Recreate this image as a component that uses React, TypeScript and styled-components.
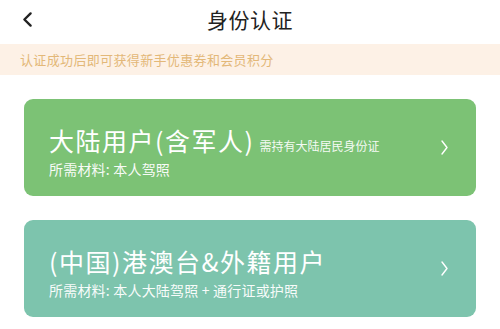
import React from "react";
import styled, { createGlobalStyle } from "styled-components";

const Global = createGlobalStyle`
  html, body { margin: 0; padding: 0; background: #ffffff; }
  body { font-family: "Noto Sans CJK SC", "Noto Sans", sans-serif; }
  * { box-sizing: border-box; }
`;

const Page = styled.div`
  width: 500px;
  height: 329px;
  overflow: hidden;
  background: #ffffff;
  display: flex;
  flex-direction: column;
`;

const Header = styled.header`
  height: 44px;
  display: grid;
  grid-template-columns: 60px 1fr 60px;
  align-items: center;
`;

const BackButton = styled.button`
  border: none;
  background: none;
  padding: 0 0 0 22px;
  height: 44px;
  display: flex;
  align-items: center;
  margin-top: -5px;
`;

const Title = styled.h1`
  margin: 0;
  margin-top: -6px;
  text-align: center;
  font-size: 21px;
  font-weight: 400;
  color: #222222;
  letter-spacing: 0.5px;
`;

const Banner = styled.div`
  height: 31px;
  background: #fdf1e6;
  color: #e3b878;
  font-size: 13px;
  letter-spacing: 0.35px;
  display: flex;
  align-items: center;
  padding-left: 20px;
`;

const List = styled.div`
  display: flex;
  flex-direction: column;
  gap: 24px;
  padding: 24px 24px 0;
`;

const Card = styled.div<{ $bg: string }>`
  height: 97px;
  border-radius: 9px;
  background: ${(p) => p.$bg};
  display: flex;
  align-items: center;
  padding: 0 28px 0 25px;
  color: #ffffff;
`;

const CardBody = styled.div`
  flex: 1;
  display: flex;
  flex-direction: column;
  gap: 4px;
  margin-top: 9px;
`;

const TitleRow = styled.div`
  display: flex;
  align-items: baseline;
  gap: 5px;
`;

const CardTitle = styled.span`
  font-size: 25px;
  line-height: 30px;
  font-weight: 400;
  letter-spacing: 1.5px;
`;

const Note = styled.span`
  font-size: 12px;
  opacity: 0.92;
`;

const Materials = styled.span`
  font-size: 14px;
  line-height: 20px;
  opacity: 0.95;
  letter-spacing: 0.2px;
`;

const Chevron = ({ color, w, h, sw }: { color: string; w: number; h: number; sw: number }) => (
  <svg width={w} height={h} viewBox={`0 0 ${w} ${h}`} fill="none">
    <polyline
      points={`${w - sw},${sw} ${sw},${h / 2} ${w - sw},${h - sw}`}
      stroke={color}
      strokeWidth={sw}
      strokeLinecap="round"
      strokeLinejoin="round"
    />
  </svg>
);

const Arrow = () => (
  <svg width="7" height="15" viewBox="0 0 7 15" fill="none">
    <polyline
      points="1,1 6,7.5 1,14"
      stroke="#ffffff"
      strokeWidth="1.4"
      strokeLinecap="round"
      strokeLinejoin="round"
    />
  </svg>
);

export default function App() {
  return (
    <>
      <Global />
      <Page>
        <Header>
          <BackButton aria-label="back">
            <Chevron color="#222222" w={11} h={17} sw={2.4} />
          </BackButton>
          <Title>身份认证</Title>
          <div />
        </Header>
        <Banner>认证成功后即可获得新手优惠券和会员积分</Banner>
        <List>
          <Card $bg="#7cc275">
            <CardBody>
              <TitleRow>
                <CardTitle>大陆用户(含军人)</CardTitle>
                <Note>需持有大陆居民身份证</Note>
              </TitleRow>
              <Materials>所需材料: 本人驾照</Materials>
            </CardBody>
            <Arrow />
          </Card>
          <Card $bg="#7dc4ad">
            <CardBody>
              <TitleRow>
                <CardTitle>(中国)港澳台&amp;外籍用户</CardTitle>
              </TitleRow>
              <Materials>所需材料: 本人大陆驾照 + 通行证或护照</Materials>
            </CardBody>
            <Arrow />
          </Card>
        </List>
      </Page>
    </>
  );
}
